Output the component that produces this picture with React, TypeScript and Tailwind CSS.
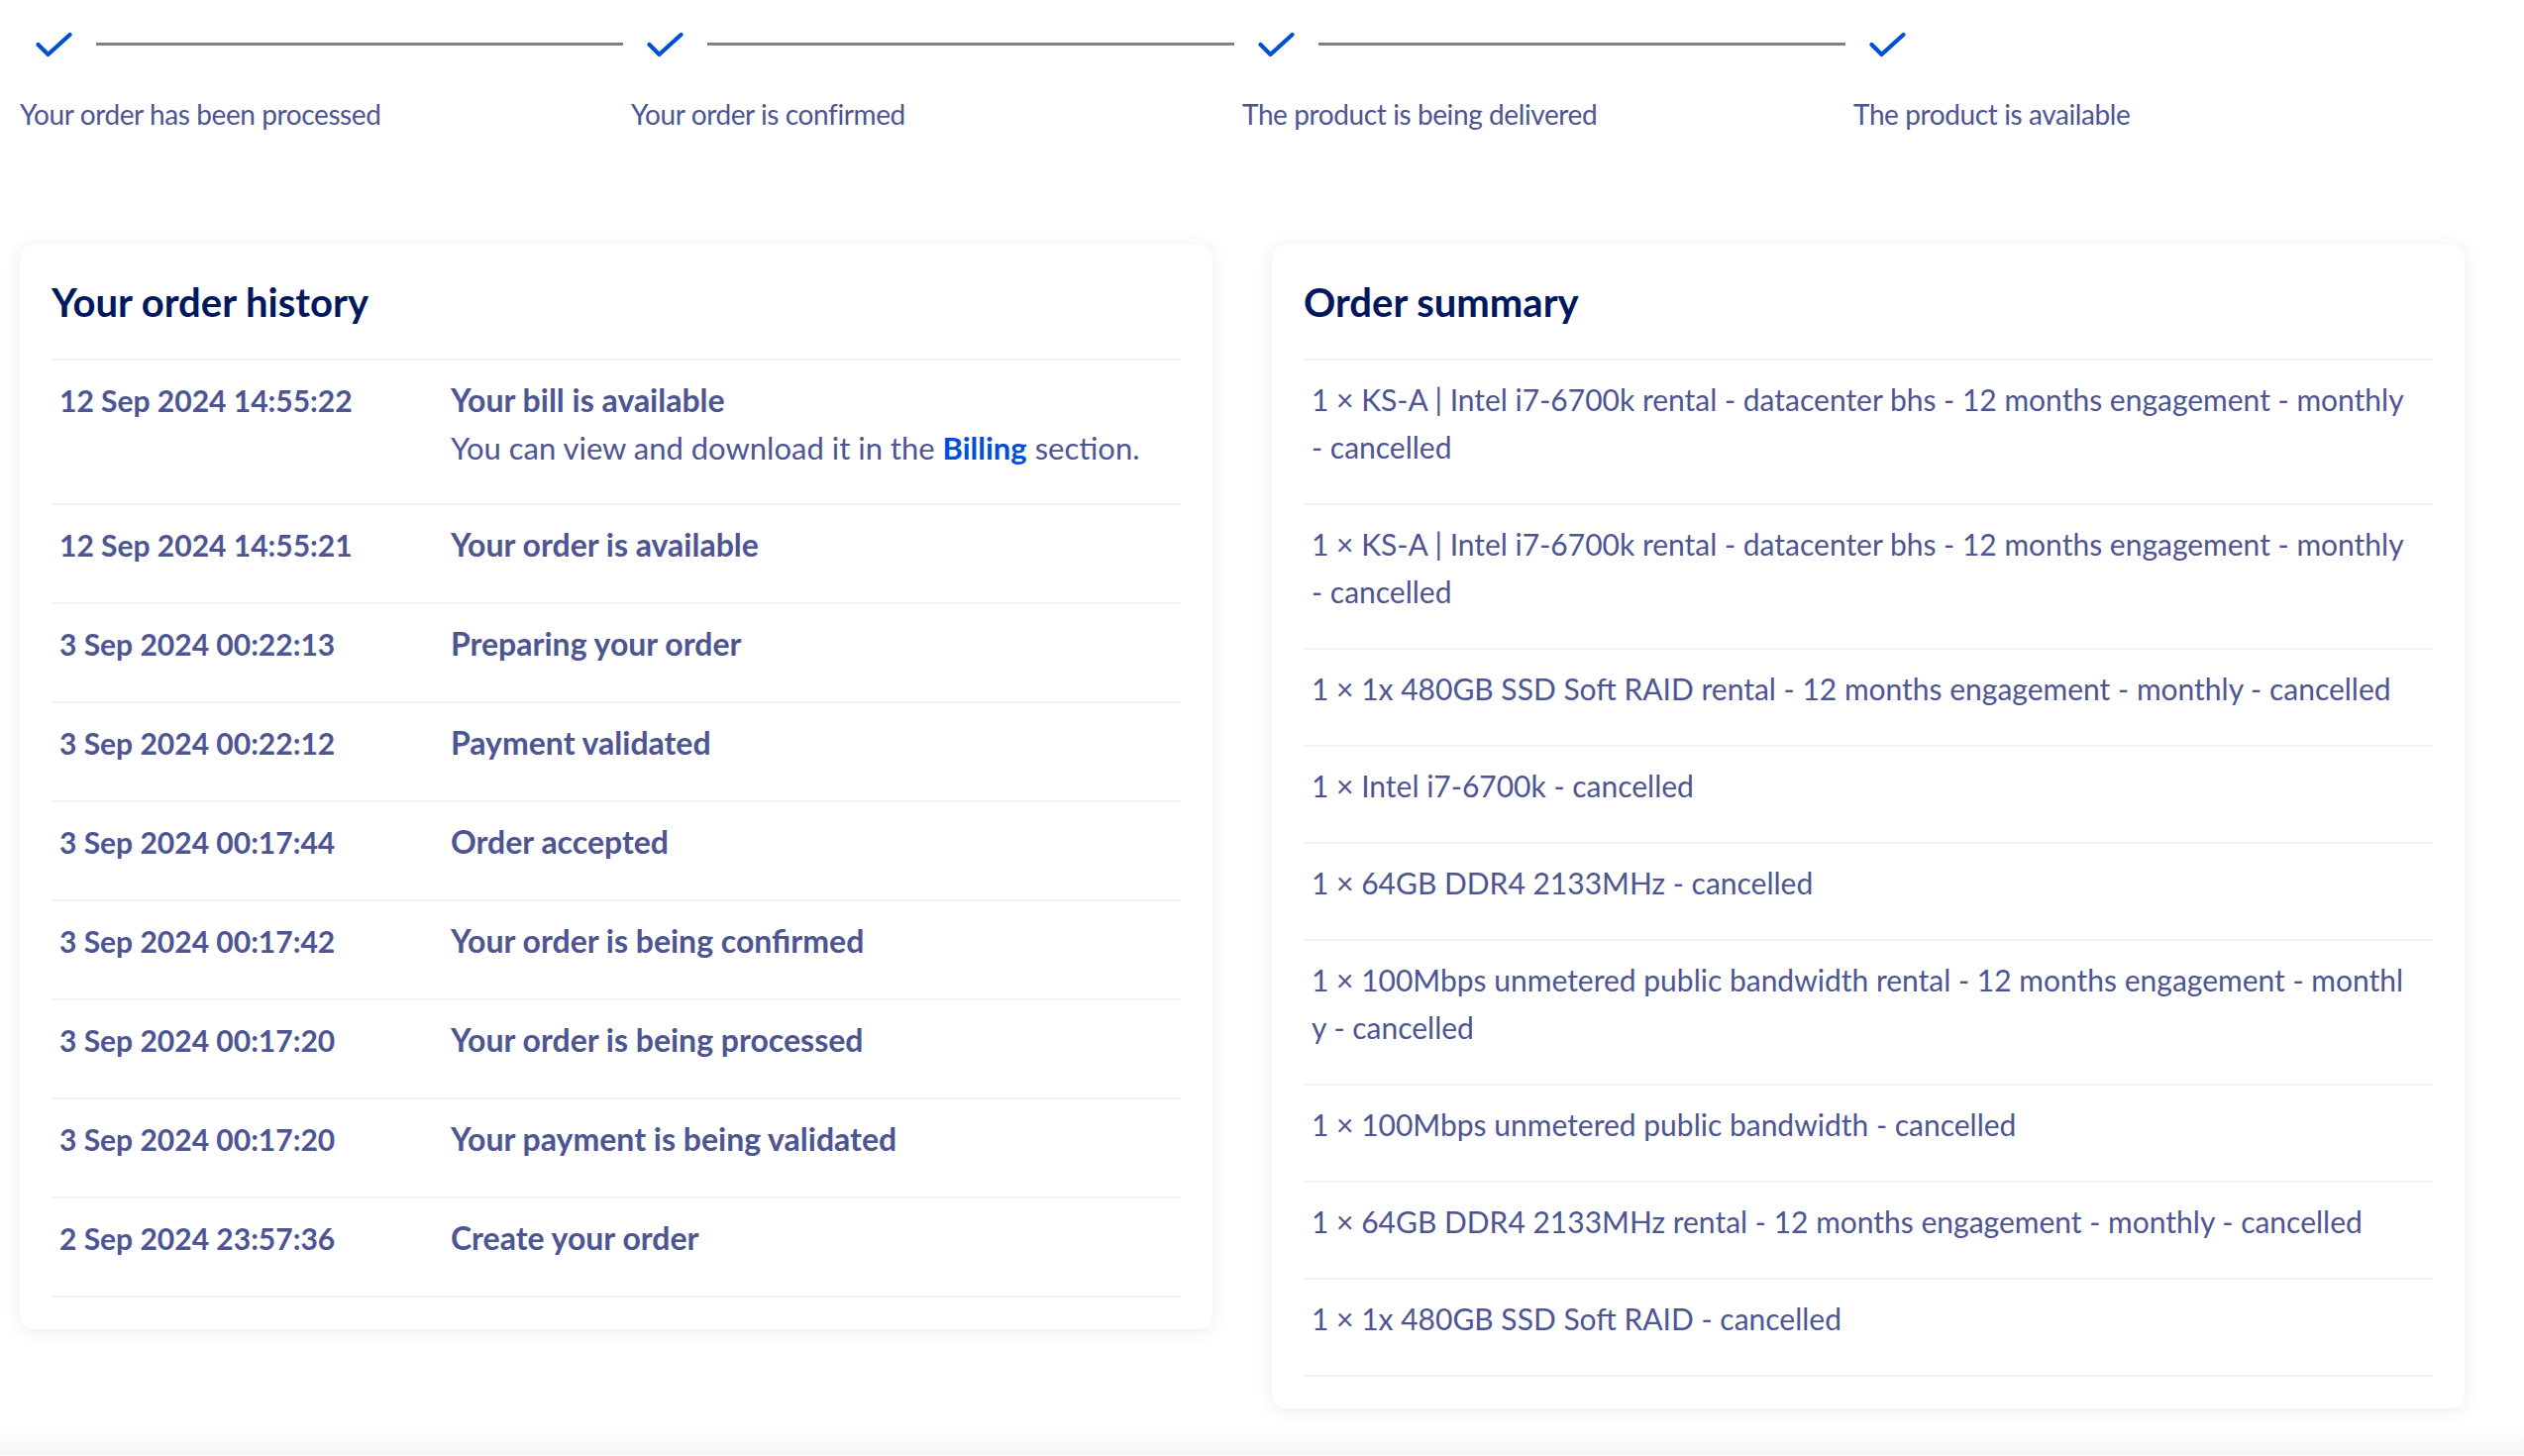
import React from "react";

const steps = [
  "Your order has been processed",
  "Your order is confirmed",
  "The product is being delivered",
  "The product is available",
];

const history: { date: string; title: string; desc?: boolean }[] = [
  { date: "12 Sep 2024 14:55:22", title: "Your bill is available", desc: true },
  { date: "12 Sep 2024 14:55:21", title: "Your order is available" },
  { date: "3 Sep 2024 00:22:13", title: "Preparing your order" },
  { date: "3 Sep 2024 00:22:12", title: "Payment validated" },
  { date: "3 Sep 2024 00:17:44", title: "Order accepted" },
  { date: "3 Sep 2024 00:17:42", title: "Your order is being confirmed" },
  { date: "3 Sep 2024 00:17:20", title: "Your order is being processed" },
  { date: "3 Sep 2024 00:17:20", title: "Your payment is being validated" },
  { date: "2 Sep 2024 23:57:36", title: "Create your order" },
];

const summary: string[][] = [
  ["1 × KS-A | Intel i7-6700k rental - datacenter bhs - 12 months engagement - monthly", "- cancelled"],
  ["1 × KS-A | Intel i7-6700k rental - datacenter bhs - 12 months engagement - monthly", "- cancelled"],
  ["1 × 1x 480GB SSD Soft RAID rental - 12 months engagement - monthly - cancelled"],
  ["1 × Intel i7-6700k - cancelled"],
  ["1 × 64GB DDR4 2133MHz - cancelled"],
  ["1 × 100Mbps unmetered public bandwidth rental - 12 months engagement - monthl", "y - cancelled"],
  ["1 × 100Mbps unmetered public bandwidth - cancelled"],
  ["1 × 64GB DDR4 2133MHz rental - 12 months engagement - monthly - cancelled"],
  ["1 × 1x 480GB SSD Soft RAID - cancelled"],
];

function Check() {
  return (
    <svg width="37" height="26" viewBox="0 0 37 26" fill="none" className="ml-[16px] shrink-0">
      <path d="M2.5 13 L12.5 23 L34.5 3" stroke="#0050d7" strokeWidth="4.2" strokeLinecap="round" strokeLinejoin="round" />
    </svg>
  );
}

export default function App() {
  return (
    <div
      className="w-full bg-white text-[#4d5592]"
      style={{ fontFamily: "Lato, 'Noto Sans', sans-serif" }}
    >
      <div className="pl-[20px] pr-[60px]">
        <div className="grid grid-cols-4 pt-[32px]">
          {steps.map((s, i) => (
            <div key={s} className="flex flex-col">
              <div className="flex h-[25px] items-center">
                <Check />
                {i < steps.length - 1 && (
                  <div className="ml-[24px] mr-[8px] h-[3px] flex-1 bg-[#808080]" />
                )}
              </div>
              <div className="mt-[34px] text-[28px] leading-[48px] tracking-[-0.4px]">{s}</div>
            </div>
          ))}
        </div>

        <div className="mt-[108px] grid grid-cols-2 items-start gap-[60px]">
          <div className="rounded-[14px] bg-white px-[32px] pb-[32px] pt-[34px] shadow-[0_2px_16px_rgba(60,60,220,0.10)]">
            <h2 className="mb-[33px] text-[40px] font-bold leading-[48px] text-[#00185e]">Your order history</h2>
            <div className="border-t-2 border-[#f2f2f2]">
              {history.map((h, i) => (
                <div key={i} className="grid grid-cols-[395px_1fr] border-b-2 border-[#f2f2f2] pb-[33px] pl-[8px] pt-[15px] text-[30px] leading-[50px]">
                  <div className="font-bold">{h.date}</div>
                  <div>
                    <div className="text-[32px] font-bold">{h.title}</div>
                    {h.desc && (
                      <div className="text-[31px] leading-[46px]">
                        You can view and download it in the{" "}
                        <span className="font-bold text-[#0050d7]">Billing</span> section.
                      </div>
                    )}
                  </div>
                </div>
              ))}
            </div>
          </div>

          <div className="rounded-[14px] bg-white px-[32px] pb-[32px] pt-[34px] shadow-[0_2px_16px_rgba(60,60,220,0.10)]">
            <h2 className="mb-[33px] text-[40px] font-bold leading-[48px] text-[#00185e]">Order summary</h2>
            <div className="border-t-2 border-[#f2f2f2]">
              {summary.map((lines, i) => (
                <div key={i} className="border-b-2 border-[#f2f2f2] pb-[33px] pl-[8px] pt-[15px] text-[30px] leading-[48px]">
                  {lines.map((l, j) => (
                    <div key={j} className="whitespace-nowrap">{l}</div>
                  ))}
                </div>
              ))}
            </div>
          </div>
        </div>
      </div>
      <div className="mt-[17px] h-[30px] bg-gradient-to-b from-white to-[#f6f6f6]" />
    </div>
  );
}
